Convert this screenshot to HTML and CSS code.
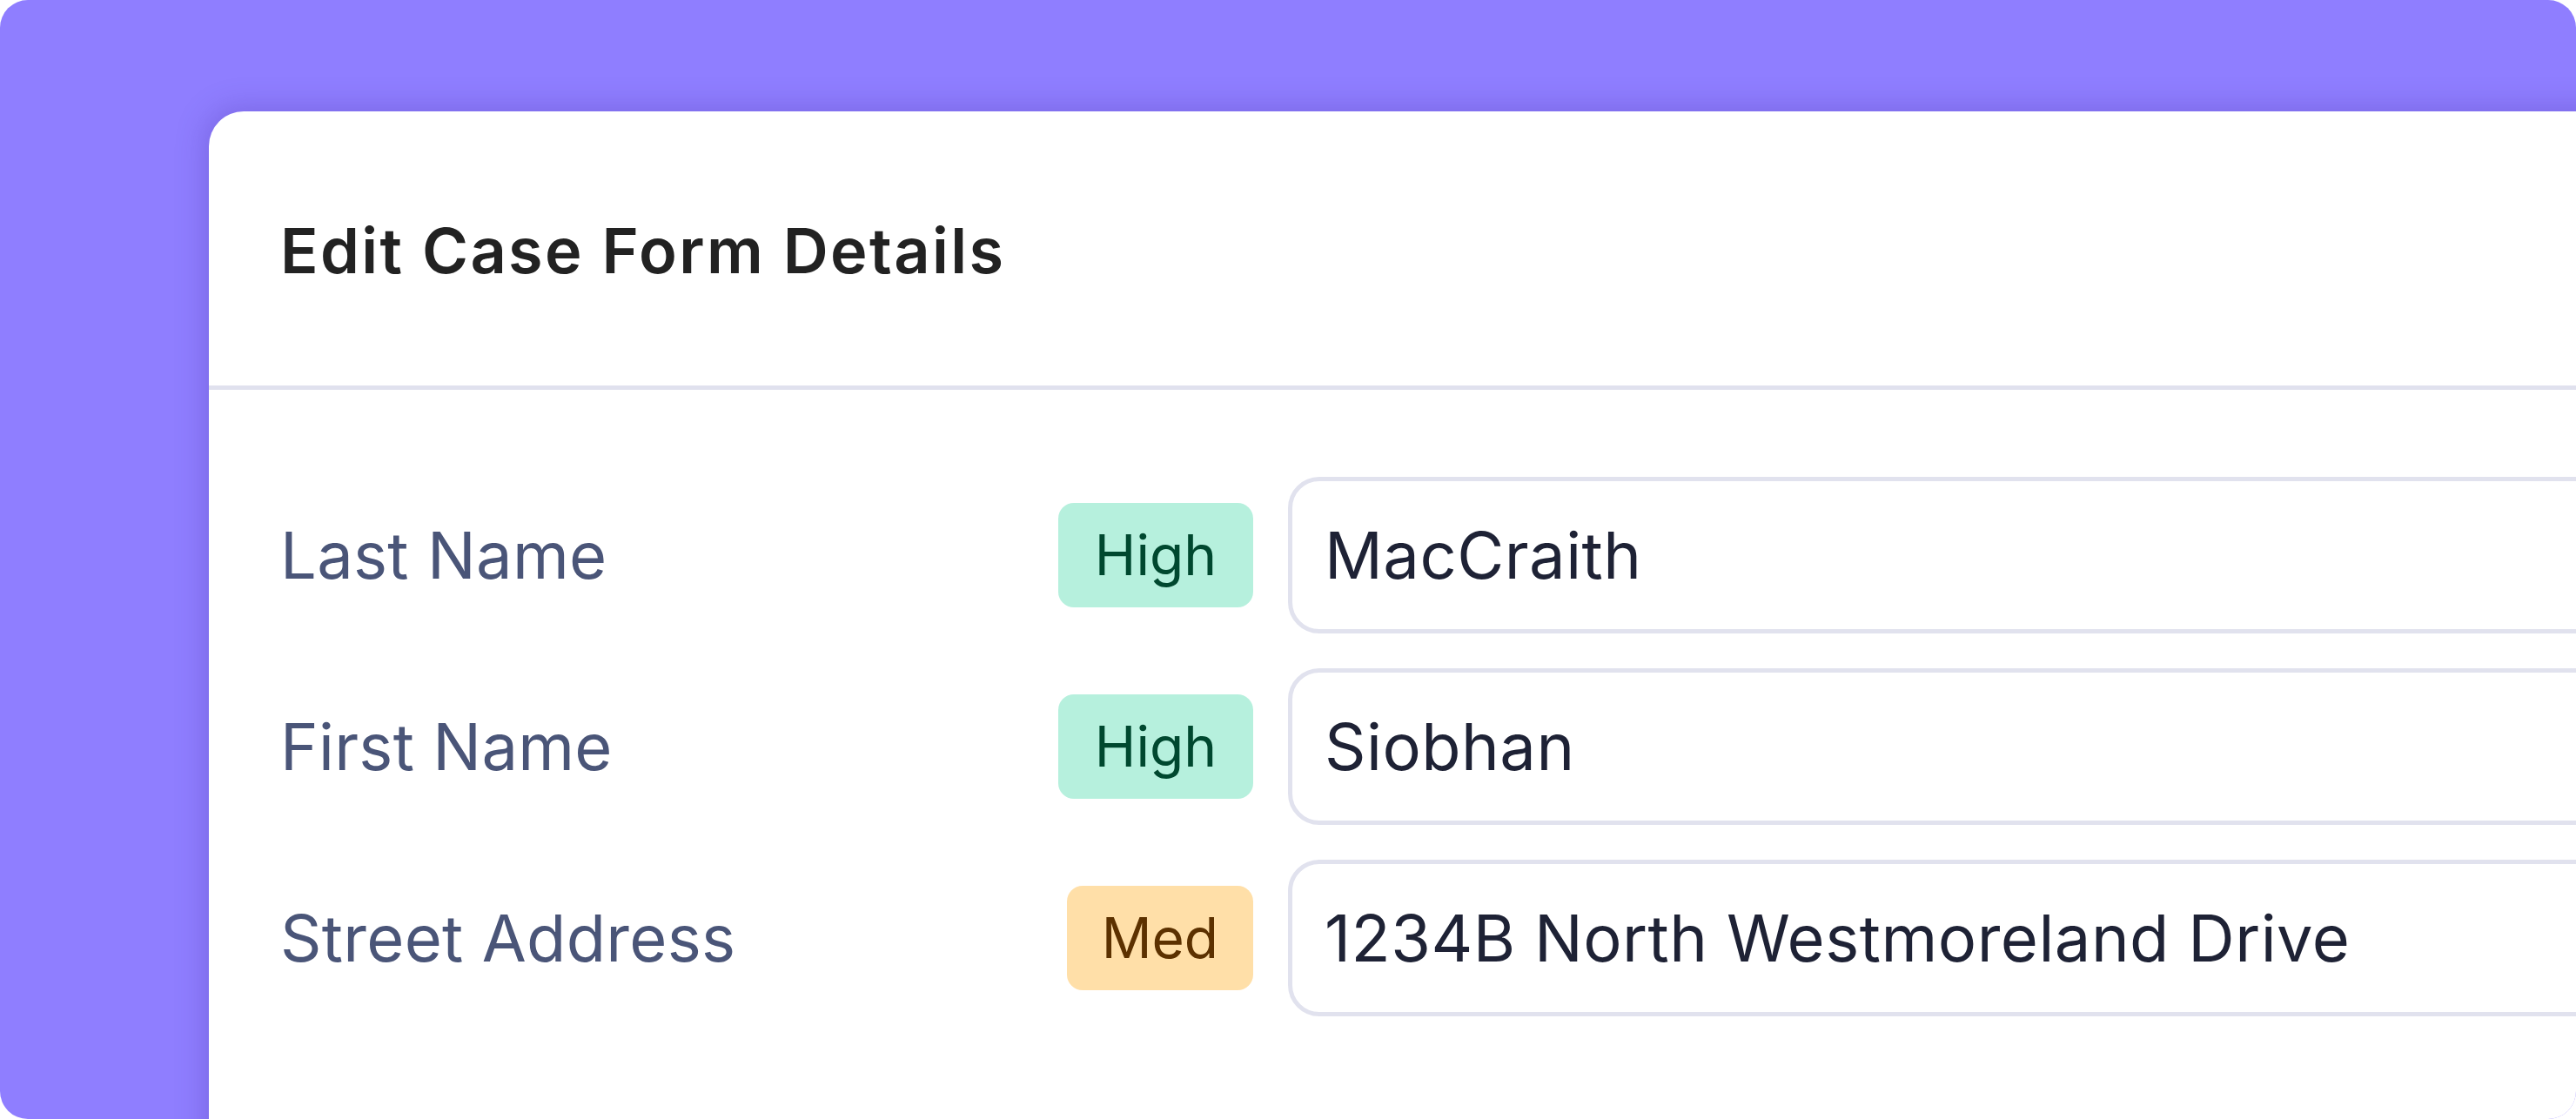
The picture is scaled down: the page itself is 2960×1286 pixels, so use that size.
FILE: index.html
```html
<!DOCTYPE html>
<html lang="en">
<head>
<meta charset="utf-8">
<title>Edit Case Form Details</title>
<link rel="stylesheet" href="styles.css">
</head>
<body>
<div class="stage">
  <div class="card">
    <div class="card-header">
      <h1 class="title">Edit Case Form Details</h1>
    </div>
    <div class="card-body">
      <div class="row">
        <div class="meta">
          <span class="label">Last Name</span>
          <span class="badge badge-high">High</span>
        </div>
        <div class="field">MacCraith</div>
      </div>
      <div class="row">
        <div class="meta">
          <span class="label">First Name</span>
          <span class="badge badge-high">High</span>
        </div>
        <div class="field">Siobhan</div>
      </div>
      <div class="row">
        <div class="meta">
          <span class="label">Street Address</span>
          <span class="badge badge-med">Med</span>
        </div>
        <div class="field">1234B North Westmoreland Drive</div>
      </div>
    </div>
  </div>
</div>
</body>
</html>
```

FILE: styles.css
```css
* { box-sizing: border-box; }

html, body {
  margin: 0;
  padding: 0;
  background: #ffffff;
}

body {
  font-family: "Inter", "Noto Sans", "Liberation Sans", sans-serif;
  width: 2960px;
  height: 1286px;
  overflow: hidden;
}

.stage {
  width: 2960px;
  height: 1286px;
  background: #8f7eff;
  border-radius: 32px;
  overflow: hidden;
  padding: 128px 0 0 240px;
}

.card {
  width: 3000px;
  height: 1400px;
  background: #ffffff;
  border-top-left-radius: 40px;
  box-shadow: -4px -4px 34px rgba(60, 40, 150, 0.26);
}

.card-header {
  height: 320px;
  border-bottom: 5px solid #e0e1ee;
  display: flex;
  align-items: center;
  padding: 4px 82px 0;
}

.title {
  margin: 0;
  font-size: 72px;
  font-weight: 600;
  color: #222222;
  letter-spacing: 2.4px;
  line-height: 1;
}

.card-body {
  padding: 100px 0 0 82px;
  display: flex;
  flex-direction: column;
  gap: 40px;
}

.row {
  display: grid;
  grid-template-columns: 1118px 1fr;
  column-gap: 40px;
  align-items: center;
}

.meta {
  display: flex;
  align-items: center;
  justify-content: space-between;
}

.label {
  font-size: 74px;
  color: #4a5578;
  letter-spacing: 0.3px;
  line-height: 1;
}

.badge {
  height: 120px;
  display: flex;
  align-items: center;
  padding: 0 42px;
  border-radius: 18px;
  font-size: 64px;
  line-height: 1;
}

.badge-high {
  background: #b6f0dd;
  color: #00482f;
}

.badge-med {
  background: #ffdfa8;
  color: #5c3100;
  padding: 0 40px;
}

.field {
  height: 180px;
  border: 5px solid #e1e2ee;
  border-radius: 36px;
  display: flex;
  align-items: center;
  padding-left: 37px;
  font-size: 74px;
  letter-spacing: 0.5px;
  color: #1e2235;
  line-height: 1;
}
```
